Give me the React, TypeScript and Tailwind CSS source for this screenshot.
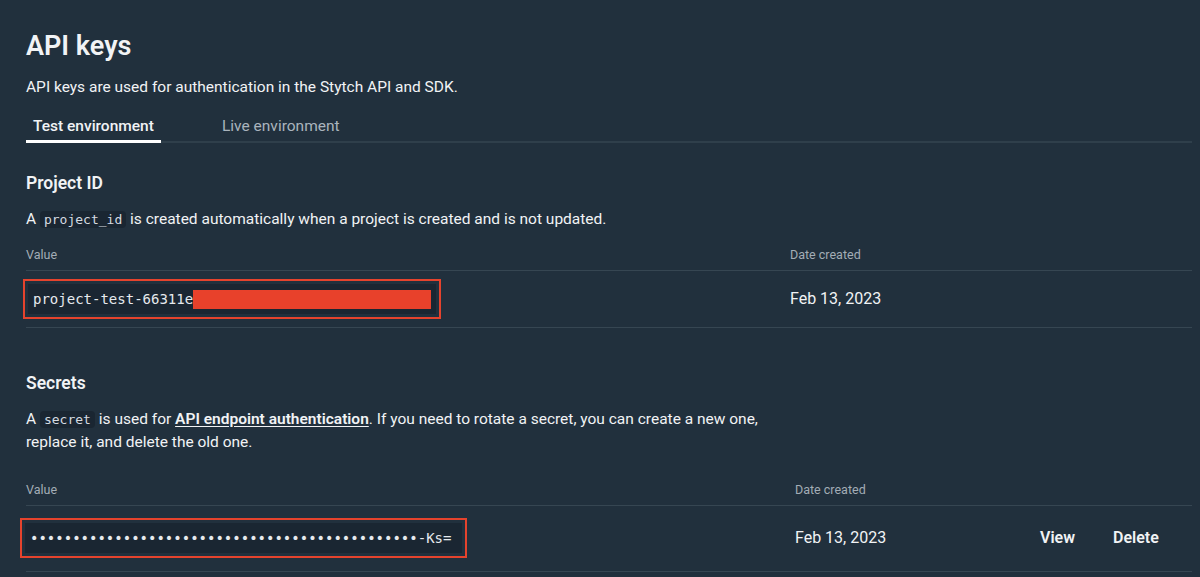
const sans = "font-['Roboto','Noto_Sans',sans-serif]";
const mono = "font-['DejaVu_Sans_Mono','Liberation_Mono',monospace]";

function Code({ children }: { children: React.ReactNode }) {
  return (
    <code className={`${mono} text-[13px] bg-[#1a2632] rounded px-1 py-[1px] text-[#d5dbe1]`}>
      {children}
    </code>
  );
}

function KeyBox({ children }: { children: React.ReactNode }) {
  return (
    <div className="inline-block border-2 border-[#e5432d] p-[3px]">
      <div className={`${mono} text-[14px] bg-[#1a2632] text-[#e6eaee] px-[5px] py-[5px] leading-5 whitespace-nowrap`}>
        {children}
      </div>
    </div>
  );
}

export default function App() {
  const dots = "•".repeat(46);
  return (
    <div className={`${sans} w-[1200px] h-[577px] overflow-hidden bg-[#21303d] text-[#f1f3f5]`}>
      <div className="pl-[26px] pr-[8px] pt-[28px]">
        <h1 className="text-[27px] font-semibold leading-9">API keys</h1>
        <p className="mt-[11px] text-[15.5px] leading-6">
          API keys are used for authentication in the Stytch API and SDK.
        </p>

        {/* tabs */}
        <div className="mt-[16px] flex border-b-2 border-[#2f3f4b] text-[15.5px]">
          <div className="w-[135px] -mb-[2px] border-b-[3px] border-white pl-[7px] pb-[2px] font-medium">
            Test environment
          </div>
          <div className="ml-[61px] pb-[2px] text-[#aab4bd]">Live environment</div>
        </div>

        {/* Project ID */}
        <h2 className="mt-[28px] text-[17.5px] font-semibold leading-6">Project ID</h2>
        <p className="mt-[12px] text-[15.5px] leading-6">
          A <Code>project_id</Code> is created automatically when a project is created and is not updated.
        </p>

        <div className="mt-[14px] grid grid-cols-[764px_1fr] border-b border-[#364652] text-[12.5px] text-[#a3adb6] pb-[5px]">
          <div>Value</div>
          <div>Date created</div>
        </div>
        <div className="grid grid-cols-[764px_1fr] items-center border-b border-[#364652] h-[57px]">
          <div className="-ml-[3px]">
            <KeyBox>
              <span className="flex items-center">
                project-test-66311e
                <span className="inline-block w-[238px] h-[19px] bg-[#e8412b]" />
              </span>
            </KeyBox>
          </div>
          <div className="text-[16px]">Feb 13, 2023</div>
        </div>

        {/* Secrets */}
        <h2 className="mt-[43px] text-[17.5px] font-semibold leading-6">Secrets</h2>
        <p className="mt-[13px] text-[15.5px] leading-[23px] max-w-[760px]">
          A <Code>secret</Code> is used for{" "}
          <span className="font-semibold underline underline-offset-2">API endpoint authentication</span>. If you
          need to rotate a secret, you can create a new one, replace it, and delete the old one.
        </p>

        <div className="mt-[27px] grid grid-cols-[769px_1fr] border-b border-[#364652] text-[12.5px] text-[#a3adb6] pb-[5px]">
          <div>Value</div>
          <div>Date created</div>
        </div>
        <div className="grid grid-cols-[769px_245px_1fr] items-center border-b border-[#364652] h-[66px]">
          <div className="-ml-[6px]">
            <KeyBox>
              <span className="pr-[6px]">{dots}-Ks=</span>
            </KeyBox>
          </div>
          <div className="text-[16px]">Feb 13, 2023</div>
          <div className="flex gap-[38px] text-[16px] font-semibold">
            <span>View</span>
            <span>Delete</span>
          </div>
        </div>
      </div>
    </div>
  );
}
